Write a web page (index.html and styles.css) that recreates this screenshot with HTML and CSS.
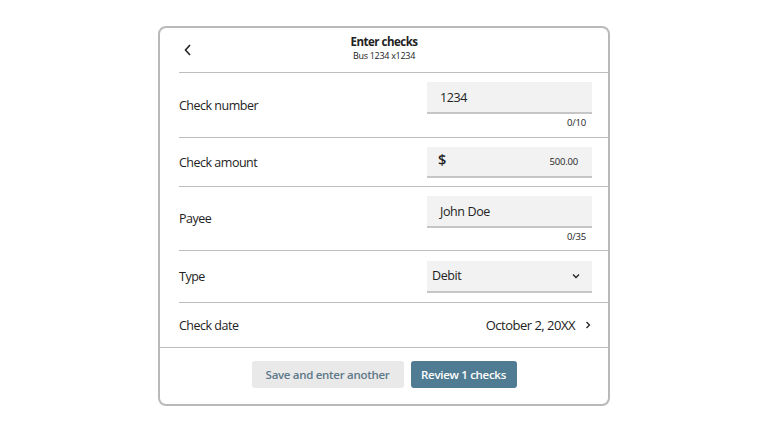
FILE: index.html
```html
<!DOCTYPE html>
<html lang="en">
<head>
<meta charset="utf-8">
<title>Enter checks</title>
<link rel="stylesheet" href="styles.css">
</head>
<body>
<div class="card">
  <header class="header">
    <button class="back" aria-label="Back">
      <svg width="10" height="12" viewBox="0 0 10 12"><path d="M7 1 L2.5 6 L7 11" fill="none" stroke="#222" stroke-width="1.6"/></svg>
    </button>
    <div class="titles">
      <div class="title">Enter checks</div>
      <div class="subtitle">Bus 1234 x1234</div>
    </div>
  </header>

  <div class="row row-counter r1">
    <div class="label">Check number</div>
    <div class="field">
      <div class="input"><span class="val">1234</span></div>
      <div class="counter">0/10</div>
    </div>
  </div>

  <div class="row r2">
    <div class="label">Check amount</div>
    <div class="field">
      <div class="input amount"><span class="dollar">$</span><span class="amt">500.00</span></div>
    </div>
  </div>

  <div class="row row-counter r3">
    <div class="label">Payee</div>
    <div class="field">
      <div class="input"><span class="val">John Doe</span></div>
      <div class="counter">0/35</div>
    </div>
  </div>

  <div class="row r4">
    <div class="label">Type</div>
    <div class="field">
      <div class="input select"><span>Debit</span>
        <svg width="10" height="8" viewBox="0 0 10 8"><path d="M2 2.5 L5 5.5 L8 2.5" fill="none" stroke="#222" stroke-width="1.3"/></svg>
      </div>
    </div>
  </div>

  <div class="row row-date">
    <div class="label">Check date</div>
    <div class="date">
      <span>October 2, 20XX</span>
      <svg width="8" height="10" viewBox="0 0 8 10"><path d="M2.5 2 L5.5 5 L2.5 8" fill="none" stroke="#222" stroke-width="1.3"/></svg>
    </div>
  </div>

  <footer class="footer">
    <button class="btn btn-secondary">Save and enter another</button>
    <button class="btn btn-primary">Review 1 checks</button>
  </footer>
</div>
</body>
</html>
```

FILE: styles.css
```css
* { box-sizing: border-box; }
html, body { margin: 0; padding: 0; background: #fff; }
body {
  font-family: "Open Sans", "Noto Sans", sans-serif;
  color: #222;
}
.card {
  width: 452px;
  margin: 26px auto 0;
  border: 2px solid #b9b9b9;
  border-radius: 8px;
  background: #fff;
}
.header {
  position: relative;
  height: 45px;
  margin-left: 19px;
  border-bottom: 1px solid #bdbdbd;
  display: flex;
  justify-content: center;
  align-items: flex-start;
}
.back {
  position: absolute;
  left: 2px;
  top: 15px;
  border: 0;
  background: none;
  padding: 0;
  width: 14px;
  height: 14px;
  display: flex;
  align-items: center;
  justify-content: center;
}
.titles {
  text-align: center;
  margin-left: -19px;
  padding-top: 5px;
}
.title {
  font-size: 11.5px;
  font-weight: 700;
  letter-spacing: -0.5px;
  line-height: 17px;
}
.subtitle {
  font-size: 9px;
  letter-spacing: -0.3px;
  line-height: 12px;
}
.row {
  margin-left: 19px;
  padding-right: 16px;
  border-bottom: 1px solid #bdbdbd;
  display: flex;
  align-items: center;
  justify-content: space-between;
}
.r1 { height: 65px; }
.r2 { height: 49px; }
.r3 { height: 64px; }
.r4 { height: 52px; }
.row-counter .field { align-self: flex-start; margin-top: 9px; }
.label {
  font-size: 12.5px;
  letter-spacing: -0.5px;
}
.field {
  width: 165px;
}
.input {
  height: 32px;
  background: #f2f2f2;
  border-bottom: 2px solid #c6c6c6;
  display: flex;
  align-items: center;
  padding: 0 13px;
  font-size: 12.5px;
  letter-spacing: -0.4px;
}
.r2 .input { height: 31px; }
.amount {
  justify-content: space-between;
  padding: 0 14px 0 11px;
}
.dollar {
  font-size: 14.5px;
  font-weight: 600;
  margin-top: -3px;
}
.amt { font-size: 9.5px; letter-spacing: -0.2px; }
.select {
  justify-content: space-between;
  padding: 0 11px 0 5px;
}
.counter {
  text-align: right;
  font-size: 9.5px;
  letter-spacing: -0.2px;
  line-height: 13px;
  padding: 2px 6px 0 0;
}
.row-date {
  height: 45px;
  margin-left: 0;
  padding-left: 19px;
}
.date {
  display: flex;
  align-items: center;
  gap: 9px;
  font-size: 13px;
  letter-spacing: -0.5px;
}
.footer {
  height: 56px;
  display: flex;
  justify-content: center;
  align-items: flex-start;
  gap: 7px;
  padding-top: 13px;
}
.btn {
  height: 27px;
  border: 0;
  border-radius: 3px;
  font-family: "Open Sans", "Noto Sans", sans-serif;
  font-weight: 600;
  font-size: 11.5px;
  letter-spacing: -0.3px;
  white-space: nowrap;
  padding: 0;
}
.btn-secondary {
  background: #e9e9e9;
  color: #5d7888;
  width: 152px;
}
.btn-primary {
  background: #4f7b93;
  color: #fff;
  width: 106px;
}
```
